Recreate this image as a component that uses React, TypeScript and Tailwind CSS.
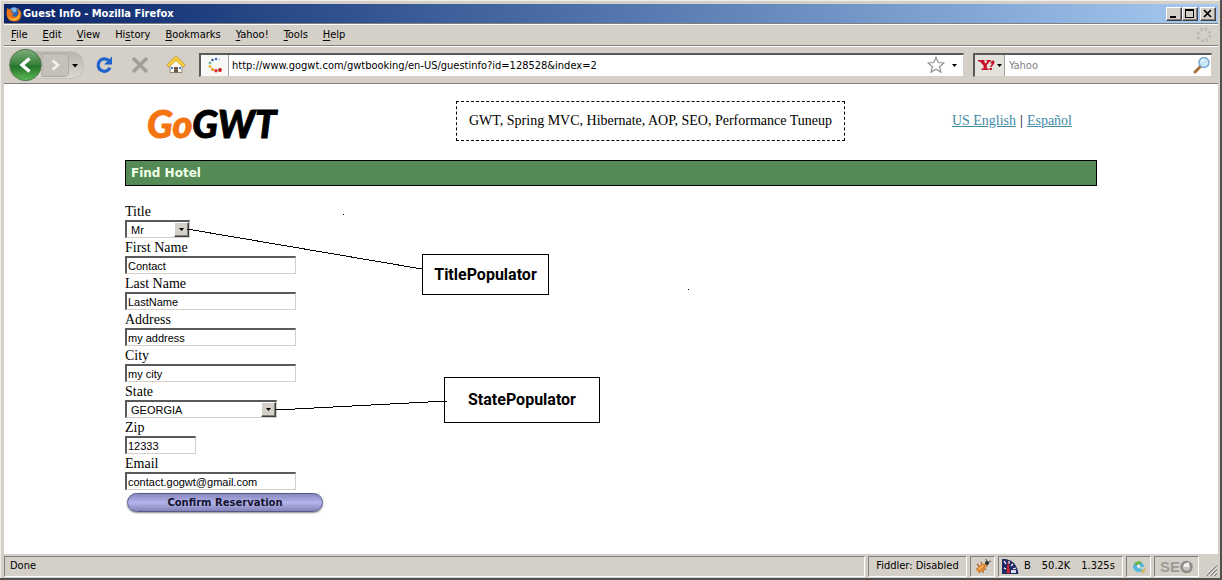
import type { ReactNode } from "react";

const UI_FONT = "font-['DejaVu_Sans_Condensed','Noto_Sans',sans-serif]";

const menus = [
  { before: "", key: "F", after: "ile" },
  { before: "", key: "E", after: "dit" },
  { before: "", key: "V", after: "iew" },
  { before: "Hi", key: "s", after: "tory" },
  { before: "", key: "B", after: "ookmarks" },
  { before: "", key: "Y", after: "ahoo!" },
  { before: "", key: "T", after: "ools" },
  { before: "", key: "H", after: "elp" },
];

const sunken = "border border-t-[#808080] border-l-[#808080] border-r-white border-b-white";
const inset =
  "border-t-2 border-l-2 border-r border-b border-t-[#5a5a5a] border-l-[#5a5a5a] border-r-[#d4d0c8] border-b-[#d4d0c8]";
const raised =
  "border border-t-white border-l-white border-r-[#404040] border-b-[#404040] bg-[#d4d0c8] shadow-[inset_-1px_-1px_0_#808080]";

function FirefoxIcon() {
  return (
    <svg width="16" height="16" viewBox="0 0 16 16" aria-hidden="true">
      <circle cx="8.2" cy="7.2" r="6.2" fill="#2f62b5" />
      <path d="M5 2.5Q8 .8 11 2.2Q9.5 4 10.5 6Q8 7 6 5z" fill="#7fb5ea" />
      <path
        d="M1.2 2.2Q2.6 2.6 3.4 3.6Q5 3.3 6 4.2Q5 5.4 5.4 6.8L8 7.4Q7.5 8.8 5.9 9Q7.2 11.4 9.8 10.6Q12.6 9.6 12.3 6.2Q12 3.5 10.8 2.2Q15.4 4 15.4 8.4Q15 15.4 8 15.6Q1 15.2.6 8.6Q.4 5 1.2 2.2z"
        fill="#e8751a"
      />
      <path d="M13.4 5.2Q15 12 9.4 14.2Q4.5 15 2.2 10.6Q5 14 9 12.6Q13.4 10.6 13.4 5.2z" fill="#f9c440" />
    </svg>
  );
}

function Down() {
  return (
    <svg width="5" height="3" viewBox="0 0 5 3" aria-hidden="true">
      <path d="M0 0h5L2.5 3z" fill="#000" />
    </svg>
  );
}

function TitleBar() {
  return (
    <header className="flex h-[19px] items-center bg-linear-to-r from-[#0a246a] to-[#a6caf0] pr-[2px] pl-[2px]">
      <FirefoxIcon />
      <h1 className={`flex-1 pl-px text-[11px] leading-[18px] font-bold text-white ${UI_FONT}`}>
        Guest Info - Mozilla Firefox
      </h1>
      <div className="flex">
        <button type="button" aria-label="Minimize" className={`h-[14px] w-4 ${raised}`}>
          <svg width="14" height="12" viewBox="0 0 14 12">
            <path d="M3 8h6v2H3z" />
          </svg>
        </button>
        <button type="button" aria-label="Maximize" className={`h-[14px] w-4 ${raised}`}>
          <svg width="14" height="12" viewBox="0 0 14 12">
            <path d="M2 1h9v9H2zM3 3v6h7V3z" fillRule="evenodd" />
          </svg>
        </button>
        <button type="button" aria-label="Close" className={`ml-[2px] h-[14px] w-4 ${raised}`}>
          <svg width="14" height="12" viewBox="0 0 14 12">
            <path d="M3 2l7 7M10 2L3 9" stroke="#000" strokeWidth="1.7" />
          </svg>
        </button>
      </div>
    </header>
  );
}

function MenuBar() {
  return (
    <nav
      aria-label="Menu bar"
      className="flex h-[23px] items-center border-t border-b border-t-[#808080] border-b-[#808080] pr-[6px] pl-[7px] shadow-[inset_0_1px_0_#fff]"
    >
      <ul className={`flex flex-1 gap-[15px] pt-px text-[11px] leading-4 ${UI_FONT}`}>
        {menus.map((m) => (
          <li key={m.key + m.after}>
            <button type="button">
              {m.before}
              <span className="underline underline-offset-2">{m.key}</span>
              {m.after}
            </button>
          </li>
        ))}
      </ul>
      <svg width="16" height="16" viewBox="0 0 16 16" aria-hidden="true">
        <circle cx="8" cy="8" r="6" fill="none" stroke="#bdb9b2" strokeWidth="3" strokeDasharray="2.4 2.31" />
      </svg>
    </nav>
  );
}

function NavButtons() {
  return (
    <svg width="76" height="34" viewBox="0 0 76 34" role="img" aria-label="Back and forward">
      <defs>
        <linearGradient id="back" x1="0" y1="0" x2="0" y2="1">
          <stop offset="0" stopColor="#7fae7c" />
          <stop offset=".45" stopColor="#3d8540" />
          <stop offset=".55" stopColor="#25752b" />
          <stop offset="1" stopColor="#5fbb55" />
        </linearGradient>
        <linearGradient id="pill" x1="0" y1="0" x2="0" y2="1">
          <stop offset="0" stopColor="#b9b6b0" />
          <stop offset=".5" stopColor="#c9c6bf" />
          <stop offset="1" stopColor="#dcd9d3" />
        </linearGradient>
      </defs>
      <path d="M14 3.5H62Q75.5 3.5 75.5 17T62 30.5H14Q1 30.5 1 17T14 3.5z" fill="url(#pill)" stroke="#c3c0b9" />
      <path d="M34 5.5H56Q60.5 5.5 60.5 10V24Q60.5 28.5 56 28.5H34z" fill="#c4c1bb" stroke="#aeaba5" />
      <path d="M44.5 12.5L50 17L44.5 21.5" fill="none" stroke="#f1f0ec" strokeWidth="2.6" />
      <circle cx="17.5" cy="17" r="15.7" fill="url(#back)" stroke="#51754f" />
      <path d="M21.5 10.5L14 17L21.5 23.5" fill="none" stroke="#fff" strokeWidth="3.4" />
      <path d="M64 16h6l-3 3.5z" fill="#000" />
    </svg>
  );
}

function Toolbar() {
  return (
    <div
      className={`flex h-[38px] items-center border-b border-b-[#808080] pr-[6px] pl-1 text-[11px] shadow-[inset_0_1px_0_#fff] ${UI_FONT}`}
    >
      <NavButtons />
      <button type="button" aria-label="Reload" className="ml-[10px]">
        <svg width="20" height="20" viewBox="0 0 20 20">
          <path d="M14.5 5.5A6.2 6.2 0 1 0 16 12.6" fill="none" stroke="#1f63cc" strokeWidth="3.2" />
          <path d="M18 1.5V9.5H10z" fill="#1f63cc" />
        </svg>
      </button>
      <button type="button" aria-label="Stop" className="ml-4">
        <svg width="20" height="20" viewBox="0 0 20 20">
          <path d="M3 3L17 17M17 3L3 17" stroke="#a29f9a" strokeWidth="3.6" />
        </svg>
      </button>
      <button type="button" aria-label="Home" className="ml-4">
        <svg width="20" height="20" viewBox="0 0 20 20">
          <path d="M4 9.5L10 4L16 9.5V17.5H4z" fill="#fdf9ec" stroke="#8f8a7c" />
          <path d="M8 12h4v5.5H8z" fill="#6c5a46" />
          <path d="M5 12h2v2H5zM13 12h2v2h-2z" fill="#4f86d4" />
          <path d="M10 .8L19.2 10L17.2 12L10 5.5L2.8 12L.8 10z" fill="#f6cf3c" stroke="#c3922a" strokeWidth=".8" />
        </svg>
      </button>
      <form className={`ml-[13px] flex h-6 flex-1 items-center bg-white ${inset}`}>
        <span className="flex h-[21px] w-7 items-center justify-center border-r border-[#a5a29c] bg-[#f8f8f6]">
          <svg width="16" height="16" viewBox="0 0 16 16" aria-hidden="true">
            <circle cx="9" cy="2" r="1.2" fill="#3a6bc4" />
            <circle cx="5.5" cy="3" r="1.2" fill="#244b8f" />
            <circle cx="3" cy="6" r="1.4" fill="#7cb6a0" />
            <circle cx="3" cy="9.5" r="1.5" fill="#e9bd3e" />
            <circle cx="5.5" cy="12.5" r="1.6" fill="#ee8d27" />
            <circle cx="9" cy="13.8" r="1.7" fill="#da2e20" />
            <circle cx="13" cy="13" r="1.9" fill="#c51a1a" />
            <circle cx="12" cy="2.5" r=".8" fill="#9fb3d8" />
          </svg>
        </span>
        <input
          aria-label="Address"
          className="min-w-0 flex-1 pt-[2px] pl-[3px] outline-none"
          defaultValue="http://www.gogwt.com/gwtbooking/en-US/guestinfo?id=128528&index=2"
        />
        <button type="button" aria-label="Bookmark this page">
          <svg width="18" height="18" viewBox="0 0 18 18">
            <path
              d="M9 1.3L11.2 6.5L16.8 7L12.6 10.7L13.9 16.3L9 13.3L4.1 16.3L5.4 10.7L1.2 7L6.8 6.5z"
              fill="#fff"
              stroke="#94928e"
              strokeWidth="1.2"
            />
          </svg>
        </button>
        <button type="button" aria-label="Show history" className="flex h-5 w-[18px] items-center justify-center">
          <Down />
        </button>
      </form>
      <form className={`ml-[9px] flex h-6 w-[239px] items-center bg-white ${inset}`}>
        <button
          type="button"
          aria-label="Choose search engine"
          className="flex h-[21px] w-[30px] items-center justify-center gap-[2px] border-r border-[#a5a29c] bg-[#e4e2dd]"
        >
          <svg width="17" height="12" viewBox="0 0 17 12">
            <path
              d="M0 1h6.5v1.5H6L7.5 4.5L9.5 2.5H8.5V1H13V2.5H12L8.8 6V9.500H10.500V11H3.500V9.500H5.500V6.500L1.800 2.500H0z"
              fill="#c8102a"
            />
            <path d="M13 3Q13.5 1 15.500 1.500Q17.500 2.500 15.500 5.500L13.500 8H12L14 4.500H12.500zM11.500 9h2.500v2h-2.500z" fill="#c8102a" />
          </svg>
          <Down />
        </button>
        <input
          aria-label="Search"
          placeholder="Yahoo"
          className="min-w-0 flex-1 pt-[2px] pl-1 outline-none placeholder:text-[#808080]"
        />
        <button type="button" aria-label="Search the web">
          <svg width="18" height="18" viewBox="0 0 18 18">
            <path d="M7.5 10.5L2 16" stroke="#a9713d" strokeWidth="3" strokeLinecap="round" />
            <circle cx="11" cy="6.5" r="5" fill="#c6e6fa" stroke="#7ba6cb" strokeWidth="1.4" />
            <path d="M8.5 6A3 3 0 0 1 11 3.5" fill="none" stroke="#fff" strokeWidth="1.3" />
          </svg>
        </button>
      </form>
    </div>
  );
}

function Field({ id, label, children }: { id: string; label: string; children: ReactNode }) {
  return (
    <div>
      <label htmlFor={id} className="block h-[18px] text-[14px] leading-5">
        {label}
      </label>
      {children}
    </div>
  );
}

function TextField({ id, label, value, short = false }: { id: string; label: string; value: string; short?: boolean }) {
  return (
    <Field id={id} label={label}>
      <input
        id={id}
        defaultValue={value}
        className={`block h-[18px] bg-white pt-px pl-px font-['Liberation_Sans',Arial,sans-serif] text-[11px] outline-none ${inset} ${
          short ? "w-[71px]" : "w-[171px]"
        }`}
      />
    </Field>
  );
}

function SelectField({ id, label, value, width }: { id: string; label: string; value: string; width: string }) {
  return (
    <Field id={id} label={label}>
      <div className={`relative h-[18px] ${width}`}>
        <select
          id={id}
          defaultValue={value}
          className={`block h-[18px] w-full appearance-none bg-white pt-px pl-1 font-['Liberation_Sans',Arial,sans-serif] text-[11px] leading-[14px] outline-none ${inset}`}
        >
          <option>{value}</option>
        </select>
        <span
          className={`pointer-events-none absolute top-[2px] right-px flex h-[15px] w-[15px] items-center justify-center ${raised}`}
        >
          <Down />
        </span>
      </div>
    </Field>
  );
}

function Annotations() {
  return (
    <div className="pointer-events-none absolute top-0 left-0 font-['Roboto','Liberation_Sans',sans-serif] text-[16px] leading-5 font-bold">
      <svg width="600" height="260" viewBox="0 0 600 260" aria-hidden="true" shapeRendering="crispEdges">
        <path d="M62 27L297 67M151 208L322 199" stroke="#000" fill="none" />
        <path d="M218 12h1v1h-1zM563 87h1v1h-1z" />
      </svg>
      <p className="absolute top-[52px] left-[297px] flex h-[41px] w-[127px] items-center justify-center border border-black">
        TitlePopulator
      </p>
      <p className="absolute top-[175px] left-[319px] flex h-[46px] w-[156px] items-center justify-center border border-black">
        StatePopulator
      </p>
    </div>
  );
}

function Page() {
  return (
    <main className="flex-1 bg-white font-['Liberation_Serif','Times_New_Roman',serif] text-[14px] text-black">
      <div className="mx-auto w-full max-w-[972px]">
        <div className="flex h-[76px] items-center pr-[25px] pb-[2px] pl-[22px]">
          <div className="w-[309px] pt-1 font-['Lato',sans-serif] text-[38px] leading-[44px] font-black text-black italic [-webkit-text-stroke:1px]">
            <span className="text-[#f47410]">Go</span>GWT
          </div>
          <p className="border border-dashed border-black px-3 py-[9px] leading-5">
            GWT, Spring MVC, Hibernate, AOP, SEO, Performance Tuneup
          </p>
          <div className="ml-auto leading-[18px]">
            <a href="#en" className="text-[#3f8aa6] underline">
              US English
            </a>
            <span className="px-1">|</span>
            <a href="#es" className="text-[#3f8aa6] underline">
              Español
            </a>
          </div>
        </div>
        <h2 className="border border-black bg-[#548b54] px-[5px] pt-px font-['DejaVu_Sans',Verdana,sans-serif] text-[12px] leading-[23px] font-bold text-[#f0ffe8]">
          Find Hotel
        </h2>
        <div className="relative mt-4">
          <form>
            <SelectField id="title" label="Title" value="Mr" width="w-[65px]" />
            <TextField id="first" label="First Name" value="Contact" />
            <TextField id="last" label="Last Name" value="LastName" />
            <TextField id="address" label="Address" value="my address" />
            <TextField id="city" label="City" value="my city" />
            <SelectField id="state" label="State" value="GEORGIA" width="w-[152px]" />
            <TextField id="zip" label="Zip" value="12333" short />
            <TextField id="email" label="Email" value="contact.gogwt@gmail.com" />
            <button
              type="button"
              className="mt-[3px] ml-[2px] block h-[19px] w-[196px] rounded-full border border-[#57578a] bg-linear-to-b from-[#8888bd] via-[#b4b4ee] to-[#8484b6] font-['DejaVu_Sans',Verdana,sans-serif] text-[10px] leading-4 font-bold text-[#14142e] shadow-[0_1px_2px_#888]"
            >
              Confirm Reservation
            </button>
          </form>
          <Annotations />
        </div>
      </div>
    </main>
  );
}

function StatusBar() {
  return (
    <footer className={`flex h-6 items-center gap-[3px] pt-px text-[11px] ${UI_FONT}`}>
      <div className={`flex h-[21px] flex-1 items-center pl-[5px] ${sunken}`}>Done</div>
      <div className={`flex h-[21px] w-[99px] items-center justify-center ${sunken}`}>Fiddler: Disabled</div>
      <div className={`flex h-[21px] w-[25px] items-center justify-center ${sunken}`}>
        <svg width="17" height="16" viewBox="0 0 17 16" aria-hidden="true">
          <path d="M3 5l3 3M7 3l2 4M2 10h4M5 14l2-3M9 14v-3M12 11l-2-2M14 7h-3" stroke="#a85d1c" strokeWidth="1.2" />
          <ellipse cx="7.5" cy="8.8" rx="5.5" ry="3" transform="rotate(-38 7.5 8.8)" fill="#df8430" />
          <path d="M4.5 10.5l5-4" stroke="#ffc27a" strokeWidth="1.3" />
          <circle cx="13" cy="4" r="2" fill="#2b2b2b" />
          <path d="M13 2l-1-2M15 3l2-1" stroke="#444" />
        </svg>
      </div>
      <div className={`flex h-[21px] w-[125px] items-center pl-[3px] ${sunken}`}>
        <svg width="17" height="16" viewBox="0 0 17 16" aria-hidden="true">
          <path d="M0 0h4Q15 2 16.5 15H0z" fill="#1d2a63" />
          <path d="M2 2l2 3M7 2L7 5M11 5L9 7M14 9l-3 1M2 9l2 1" stroke="#fff" strokeWidth="1.3" />
          <path d="M6 1L8 14L4.5 14z" fill="#d8202b" />
          <path d="M9 11h5v3H9z" fill="#d8dcea" />
        </svg>
        <span className="ml-[5px]">B</span>
        <span className="ml-[11px]">50.2K</span>
        <span className="ml-[11px]">1.325s</span>
      </div>
      <div className={`flex h-[21px] w-[25px] items-center justify-center ${sunken}`}>
        <svg width="14" height="14" viewBox="0 0 14 14" aria-hidden="true">
          <path d="M1 6Q2 1 8 1.5Q12 3 12 7H5.5Q7 9.5 11 8.5Q9 13 5 12Q1 10 1 6z" fill="#58b7dc" />
          <path d="M2 4Q5 0 10 2L6 6z" fill="#71b445" />
          <path d="M9 11Q13 10 12.5 6Q15 11 10 13.5z" fill="#d3b34c" />
          <circle cx="6.5" cy="6" r="1.6" fill="#e9f6fa" />
        </svg>
      </div>
      <div className={`flex h-[21px] w-[45px] items-center justify-center ${sunken}`}>
        <span className="font-['Liberation_Sans',Arial,sans-serif] text-[15px] leading-4 font-bold text-[#9c9a96]">SE</span>
        <svg width="13" height="14" viewBox="0 0 13 14" aria-hidden="true">
          <circle cx="6.5" cy="7" r="5" fill="#c5c3bf" stroke="#8d8b87" strokeWidth="2.4" />
          <path d="M4 4l5-2v5H4z" fill="#f1f0ee" />
        </svg>
      </div>
      <svg width="16" height="17" viewBox="0 0 16 17" className="self-end" aria-hidden="true">
        <path d="M4 15L15 4M8 15L15 8M12 15L15 12" stroke="#808080" strokeWidth="1.5" />
        <path d="M3 15L15 3M7 15L15 7M11 15L15 11" stroke="#fff" strokeWidth=".8" />
      </svg>
    </footer>
  );
}

export default function App() {
  return (
    <div className="flex min-h-screen flex-col border-r-2 border-b-2 border-[#505050] bg-[#d4d0c8] pt-1 pr-[2px] pl-1 text-black shadow-[inset_1px_1px_0_#f0eeea]">
      <TitleBar />
      <MenuBar />
      <Toolbar />
      <Page />
      <StatusBar />
    </div>
  );
}
